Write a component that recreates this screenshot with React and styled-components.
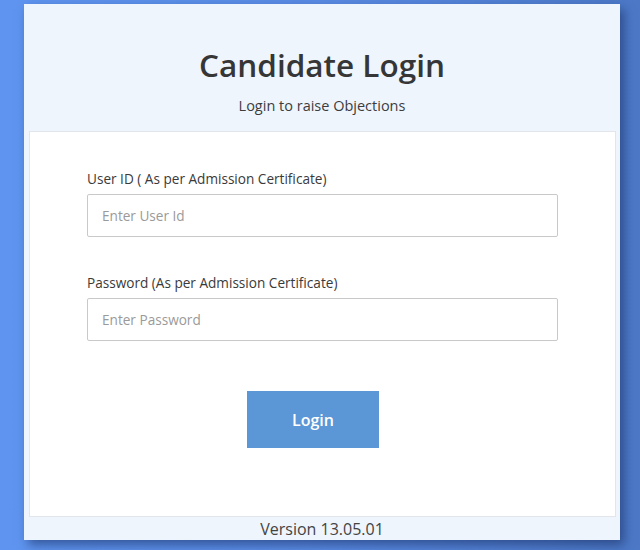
import React from 'react';
import styled, { createGlobalStyle } from 'styled-components';

const GlobalStyle = createGlobalStyle`
  html, body {
    margin: 0;
    padding: 0;
    background: #5b8de4;
    font-family: "Open Sans", "Noto Sans", sans-serif;
  }
`;

const Page = styled.div`
  width: 640px;
  height: 550px;
  box-sizing: border-box;
  padding: 4px 20px 10px 24px;
  background: linear-gradient(90deg, #5f95f0 0%, #5a8be4 50%, #4c78c6 100%);
`;

const Card = styled.div`
  width: 596px;
  height: 536px;
  box-sizing: border-box;
  background: #eef5fd;
  display: flex;
  flex-direction: column;
  box-shadow: 4px 5px 10px rgba(20, 40, 90, 0.55);
`;

const Header = styled.div`
  height: 127px;
  box-sizing: border-box;
  padding-top: 41px;
  text-align: center;
`;

const Title = styled.h1`
  margin: 0;
  font-size: 31.5px;
  font-weight: 600;
  color: #363636;
  line-height: 40px;
`;

const Subtitle = styled.p`
  margin: 11px 0 0;
  font-size: 14.5px;
  color: #3d3d3d;
  line-height: 20px;
`;

const Panel = styled.form`
  margin: 0 4px 0 5px;
  height: 386px;
  box-sizing: border-box;
  background: #fff;
  border: 1px solid #e2e6ea;
  padding: 38px 57px 0 57px;
  display: flex;
  flex-direction: column;
`;

const Field = styled.div`
  display: flex;
  flex-direction: column;
  margin-bottom: ${(p) => p.gap || 0}px;
`;

const Label = styled.label`
  font-size: 13.6px;
  color: #3a3a3a;
  line-height: 18px;
  margin-bottom: 6px;
`;

const Input = styled.input`
  width: 471px;
  height: 43px;
  box-sizing: border-box;
  border: 1px solid #c9c9c9;
  border-radius: 2px;
  padding: 0 14px;
  font-family: inherit;
  font-size: 13.6px;
  color: #333;
  outline: none;
  &::placeholder {
    color: #9a9a9a;
  }
`;

const ButtonRow = styled.div`
  display: flex;
  justify-content: center;
  margin-top: 50px;
  padding-right: 19px;
`;

const LoginButton = styled.button`
  width: 132px;
  height: 57px;
  border: none;
  background: #5b96d6;
  color: #fff;
  font-family: inherit;
  font-size: 16px;
  font-weight: 600;
  cursor: pointer;
`;

const Footer = styled.div`
  flex: 1;
  display: flex;
  align-items: center;
  justify-content: center;
  font-size: 16px;
  color: #444;
`;

export default function App() {
  return (
    <>
      <GlobalStyle />
      <Page>
        <Card>
          <Header>
            <Title>Candidate Login</Title>
            <Subtitle>Login to raise Objections</Subtitle>
          </Header>
          <Panel onSubmit={(e) => e.preventDefault()}>
            <Field gap={37}>
              <Label>User ID ( As per Admission Certificate)</Label>
              <Input placeholder="Enter User Id" />
            </Field>
            <Field>
              <Label>Password (As per Admission Certificate)</Label>
              <Input type="password" placeholder="Enter Password" />
            </Field>
            <ButtonRow>
              <LoginButton type="submit">Login</LoginButton>
            </ButtonRow>
          </Panel>
          <Footer>Version 13.05.01</Footer>
        </Card>
      </Page>
    </>
  );
}
